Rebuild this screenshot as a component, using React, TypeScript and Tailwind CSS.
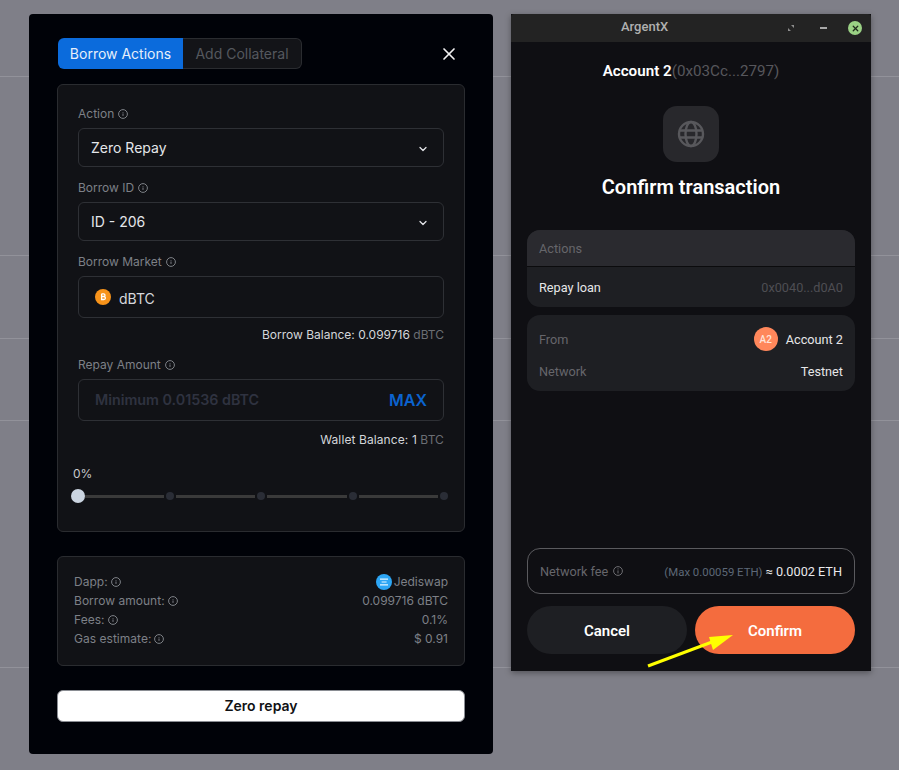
import { ChevronDown, X } from "lucide-react";

const inter = "font-['Inter',sans-serif]";
const barlow = "font-['Roboto',sans-serif]";

function Info({ size = 10 }: { size?: number }) {
  return (
    <svg width={size} height={size} viewBox="0 0 10 10" fill="none" stroke="#8a8d93" strokeWidth="0.9" className="shrink-0">
      <circle cx="5" cy="5" r="4.4" />
      <path d="M5 4.5v2.4M5 3v.7" />
    </svg>
  );
}

function Label({ text }: { text: string }) {
  return (
    <div className="flex items-center gap-[4px] h-[14px] text-[12px] leading-[14px] text-[#7d8087]">
      {text}
      <Info />
    </div>
  );
}

function SelectBox({ value }: { value: string }) {
  return (
    <div className="mt-[7px] flex h-[39px] items-center justify-between rounded-[6px] border border-[#2e3035] pl-[12px] pr-[14px] text-[14px] text-[#e4e6ea]">
      {value}
      <ChevronDown size={12} strokeWidth={2.5} color="#e4e6ea" className="mt-[2px]" />
    </div>
  );
}

function Summary({ label, children }: { label: string; children: React.ReactNode }) {
  return (
    <div className="flex h-[19px] items-center justify-between text-[12px] text-[#7d8087]">
      <div className="flex items-center gap-[3px] tracking-[0.03px]">
        {label}
        <Info />
      </div>
      <div className="flex items-center gap-[2px]">{children}</div>
    </div>
  );
}

function Dot() {
  return <div className="mx-[2px] h-[8px] w-[8px] shrink-0 rounded-full bg-[#2a2d36]" />;
}

function Track({ w }: { w: string }) {
  return <div className={`h-[3px] bg-[#3a3a3a] ${w}`} />;
}

function Slider() {
  return (
    <div className="mt-[8px] -ml-[7px] flex h-[14px] w-[380px] items-center">
      <div className="h-[14px] w-[14px] shrink-0 rounded-full bg-[#cbd5e1]" />
      <Track w="w-[79px]" />
      <Dot />
      <Track w="w-[79px]" />
      <Dot />
      <Track w="w-[80px]" />
      <Dot />
      <Track w="w-[79px]" />
      <Dot />
    </div>
  );
}

function BorrowModal() {
  return (
    <div className={`absolute left-[29px] top-[14px] h-[740px] w-[464px] rounded-[4px] bg-[#000208] px-[28px] pt-[24px] ${inter}`}>
      <div className="flex h-[31px] items-center justify-between">
        <div className="ml-[1px] flex h-[31px] text-[14px]">
          <div className="flex w-[125px] items-center justify-center rounded-l-[6px] bg-[#0b6bdc] text-[#e6eefa]">Borrow Actions</div>
          <div className="flex w-[119px] items-center justify-center rounded-r-[6px] border border-l-0 border-[#2a2c30] bg-[#131418] text-[#55585e]">Add Collateral</div>
        </div>
        <X size={20} strokeWidth={2} color="#f2f2f2" className="mr-[6px]" />
      </div>

      <div className="mt-[15px] h-[448px] rounded-[6px] border border-[#2a2c30] bg-[#111216] px-[20px] pt-[22px]">
        <Label text="Action" />
        <SelectBox value="Zero Repay" />
        <div className="mt-[14px]"><Label text="Borrow ID" /></div>
        <SelectBox value="ID - 206" />
        <div className="mt-[14px]"><Label text="Borrow Market" /></div>
        <div className="mt-[7px] flex h-[42px] items-center gap-[8px] rounded-[6px] border border-[#2e3035] pl-[16px] text-[14px] text-[#d6d8dc]">
          <svg width="16" height="16" viewBox="0 0 16 16" className="-mt-[1px]">
            <circle cx="8" cy="8" r="8" fill="#f7931a" />
            <path d="M6.6 4.8v6.4M6.6 4.9h2c.9 0 1.4.5 1.4 1.3s-.5 1.3-1.4 1.3h-2M6.6 7.6h2.3c1 0 1.5.5 1.5 1.4s-.6 1.5-1.6 1.5H6.6" fill="none" stroke="#fff" strokeWidth="1.3" />
          </svg>
          <span className="pt-[2px]">dBTC</span>
        </div>
        <div className="mt-[10px] text-right text-[12px] leading-[14px] text-[#d4d6da]">
          Borrow Balance: 0.099716 <span className="text-[#6b6e74]">dBTC</span>
        </div>
        <div className="mt-[16px]"><Label text="Repay Amount" /></div>
        <div className="mt-[7px] flex h-[42px] items-center justify-between rounded-[6px] border border-[#2e3035] pl-[16px] pr-[16px]">
          <span className="text-[14.3px] font-semibold text-[#2f3240]">Minimum 0.01536 dBTC</span>
          <span className="text-[16px] font-semibold text-[#0b63ce]">MAX</span>
        </div>
        <div className="mt-[12px] text-right text-[12px] leading-[14px] tracking-[0.1px] text-[#d4d6da]">
          Wallet Balance: 1 <span className="text-[#6b6e74]">BTC</span>
        </div>
        <div className="mt-[20px] -ml-[5px] text-[12px] leading-[14px] text-[#c8cacd]">0%</div>
        <Slider />
      </div>

      <div className="mt-[24px] flex h-[110px] flex-col justify-center rounded-[6px] border border-[#2a2c30] bg-[#111216] px-[16px] pb-[2px]">
        <Summary label="Dapp:">
          <svg width="16" height="16" viewBox="0 0 16 16">
            <circle cx="8" cy="8" r="8" fill="#2da6f5" />
            <path d="M4 4.6h8v1.1H4zM5.6 7.5h5v1.1h-5zM4 10.3h8v1.1H4z" fill="#e6f6ff" />
          </svg>
          Jediswap
        </Summary>
        <Summary label="Borrow amount:">0.099716 dBTC</Summary>
        <Summary label="Fees:">0.1%</Summary>
        <Summary label="Gas estimate:">$ 0.91</Summary>
      </div>

      <button className="mt-[24px] flex h-[32px] w-full items-center justify-center rounded-[6px] border border-[#8a8d93] bg-white pb-[1px] text-[14px] font-semibold text-[#101114]">
        Zero repay
      </button>
    </div>
  );
}

function ArgentWindow() {
  return (
    <div className={`absolute left-[511px] top-[14px] flex h-[657px] w-[360px] flex-col bg-[#0f0f13] shadow-[0_2px_6px_rgba(0,0,0,0.35)] ${barlow}`}>
      <div className="flex h-[28px] shrink-0 items-center rounded-t-[3px] bg-[#232323]">
        <span className="ml-[110px] w-[47px] -mt-[3px] text-[13px] font-medium text-[#b0b0b0]">ArgentX</span>
        <svg width="8" height="8" viewBox="0 0 8 8" className="ml-[119px]" fill="#8d8d8d">
          <path d="M4 1h3v3zM4 7H1V4z" />
        </svg>
        <div className="ml-[25px] h-[2px] w-[7px] bg-[#a8a8a8]" />
        <div className="ml-[21px] flex h-[14px] w-[14px] items-center justify-center rounded-full bg-[#9ad184]">
          <X size={9} strokeWidth={3.5} color="#1f2a1c" />
        </div>
      </div>

      <div className="mt-[20px] flex justify-center text-[15.2px] leading-[18px]">
        <span className="font-semibold text-white">Account 2</span>
        <span className="text-[#57575c]">(0x03Cc...2797)</span>
      </div>

      <div className="mx-auto mt-[26px] flex h-[56px] w-[56px] items-center justify-center rounded-[14px] bg-[#28282c]">
        <svg width="28" height="28" viewBox="0 0 28 28" fill="none" stroke="#58585c" strokeWidth="2.4">
          <circle cx="14" cy="14" r="12" />
          <ellipse cx="14" cy="14" rx="5.5" ry="12" />
          <path d="M2.5 10.5h23M2.5 17.5h23" />
        </svg>
      </div>

      <div className="mt-[12px] text-center text-[20px] font-semibold leading-[26px] text-white">Confirm transaction</div>

      <div className="mx-[16px] mt-[30px] overflow-hidden rounded-[13px] bg-[#1e1f23] text-[12.7px]">
        <div className="flex h-[37px] items-center border-b border-[#0b0b0d] bg-[#2a2a2f] px-[12px] pt-[2px] text-[#66666b]">Actions</div>
        <div className="flex h-[40px] items-center justify-between px-[12px] pt-[2px]">
          <span className="text-[#e6e6e8]">Repay loan</span>
          <span className="text-[#4e4e53]">0x0040...d0A0</span>
        </div>
      </div>

      <div className="mx-[16px] mt-[8px] h-[76px] rounded-[13px] bg-[#1e1f23] px-[12px] text-[12.7px]">
        <div className="flex h-[48px] items-center justify-between">
          <span className="pt-[2px] text-[#66666b]">From</span>
          <div className="flex items-center gap-[8px] text-[#e6e6e8]">
            <div className="flex h-[24px] w-[24px] items-center justify-center rounded-full bg-[#ff875b] text-[10px] font-medium text-[#ffe3d8]">A2</div>
            <span className="pt-[2px]">Account 2</span>
          </div>
        </div>
        <div className="flex h-[16px] items-center justify-between pt-[2px]">
          <span className="text-[#66666b]">Network</span>
          <span className="text-[#e6e6e8]">Testnet</span>
        </div>
      </div>

      <div className="mx-[16px] mt-auto flex h-[46px] items-center justify-between rounded-[13px] border border-[#5a5a5e] pl-[12px] pr-[12px] pt-[1px]">
        <div className="flex items-center gap-[5px] text-[12.7px] text-[#66666b]">
          Network fee
          <svg width="10" height="10" viewBox="0 0 10 10" fill="none" stroke="#77777c" strokeWidth="0.9">
            <circle cx="5" cy="5" r="4.4" />
            <path d="M5 4.4v3M5 2.4v1" />
          </svg>
        </div>
        <div className="flex items-baseline gap-[3px] text-[12.7px] text-[#e9e9ec]">
          <span className="text-[11.4px] text-[#5d6877]">(Max 0.00059 ETH)</span>
          ≈ 0.0002 ETH
        </div>
      </div>

      <div className="mx-[16px] mb-[17px] mt-[12px] flex gap-[8px] text-[15px] font-semibold text-white">
        <button className="h-[48px] flex-1 rounded-full bg-[#1e1f23] pt-[2px]">Cancel</button>
        <button className="h-[48px] flex-1 rounded-full bg-[#f46c3e] pt-[2px]">Confirm</button>
      </div>
    </div>
  );
}

export default function App() {
  return (
    <div className="relative h-[770px] w-[899px] overflow-hidden bg-[#7f7f88]">
      <div className="flex flex-col">
        <div className="h-[77px] border-b border-[#92929a]" />
        <div className="h-[179px] border-b border-[#92929a]" />
        <div className="h-[83px] border-b border-[#92929a]" />
        <div className="h-[82px] border-b border-[#92929a]" />
        <div className="h-[247px] border-b border-[#92929a]" />
      </div>

      <BorrowModal />
      <ArgentWindow />

      {/* annotation arrow over the confirm button */}
      <svg width="100" height="50" viewBox="0 0 100 50" className="absolute left-[640px] top-[626px]">
        <path d="M8 40 L 72 16" stroke="#ffff00" strokeWidth="3" />
        <path d="M93 9 L 69 11 L 73 24 Z" fill="#ffff00" />
      </svg>
    </div>
  );
}
